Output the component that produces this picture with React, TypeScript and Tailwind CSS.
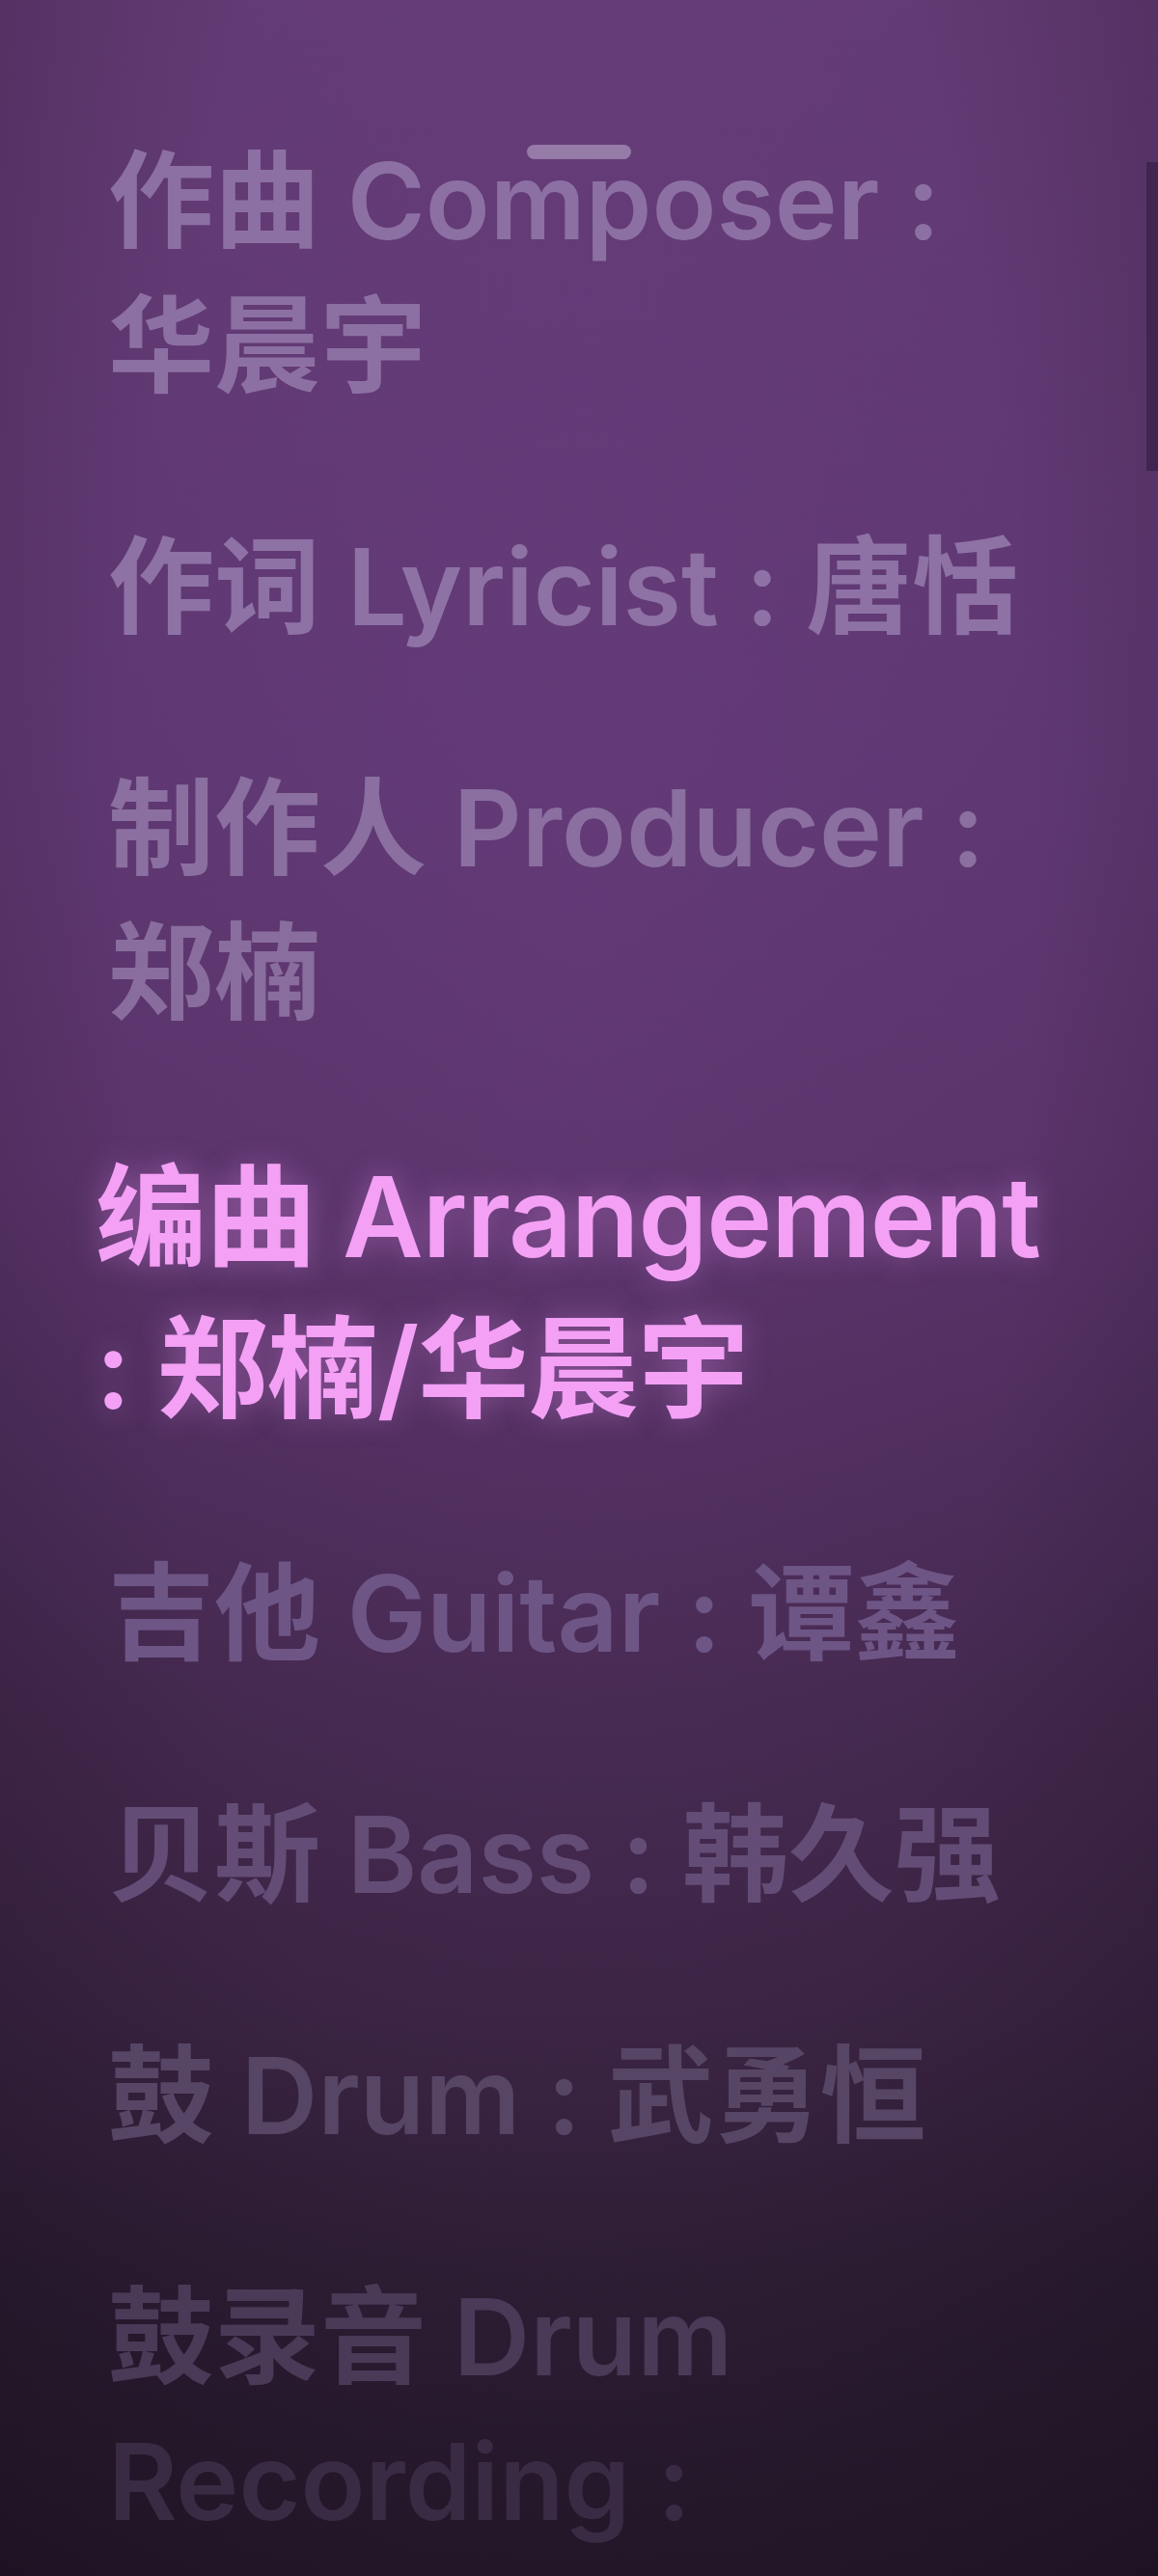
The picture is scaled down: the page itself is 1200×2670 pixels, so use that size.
export default function App() {
  const credits: { lines: [string, string][]; active?: boolean }[] = [
    { lines: [["作曲 Composer :", "text-[#8d70a3]"], ["华晨宇", "text-[#8d70a3]"]] },
    { lines: [["作词 Lyricist : 唐恬", "text-[#8e72a5]"]] },
    { lines: [["制作人 Producer :", "text-[#8a6fa0]"], ["郑楠", "text-[#896d9e]"]] },
    { lines: [["编曲 Arrangement", "text-[#f3a0f5]"], [": 郑楠/华晨宇", "text-[#f3a0f5]"]], active: true },
    { lines: [["吉他 Guitar : 谭鑫", "text-[#6d5585]"]] },
    { lines: [["贝斯 Bass : 韩久强", "text-[#634d76]"]] },
    { lines: [["鼓 Drum : 武勇恒", "text-[#574565]"]] },
    { lines: [["鼓录音 Drum", "text-[#4a3957]"], ["Recording :", "text-[#3a2b44]"]] },
  ]

  return (
    <div className="relative h-[2670px] w-full overflow-hidden bg-[linear-gradient(180deg,#633b75_0%,#5f3873_30%,#5a346b_45%,#4d2d5b_58%,#45294f_66%,#3b2444_78%,#2e1e35_88%,#25182b_100%)] font-['Inter','Noto_Sans_CJK_SC',sans-serif] font-semibold">
      {/* soft vignette */}
      <div className="pointer-events-none absolute inset-0 bg-[radial-gradient(ellipse_at_50%_35%,rgba(120,70,140,0.18)_0%,rgba(0,0,0,0)_55%,rgba(12,6,16,0.3)_100%)]" />

      {/* drag handle */}
      <div className="absolute left-[546px] top-[150px] h-[15px] w-[108px] rounded-full bg-[#967aa8]" />

      {/* scrollbar */}
      <div className="absolute right-0 top-[168px] h-[320px] w-[12px] bg-[#3f2550]" />

      <div className="relative flex flex-col gap-[100px] pt-[133px]">
        {credits.map((c, i) => (
          <div
            key={i}
            className={
              c.active
                ? "pl-[99px] text-[115px] leading-[157px] tracking-[-1px] [text-shadow:0_0_30px_rgba(240,150,245,0.35)]"
                : "pl-[112px] text-[110px] leading-[150px] tracking-[0px]"
            }
          >
            {c.lines.map(([text, color], j) => (
              <div key={j} className={`whitespace-nowrap ${color}`}>
                {text}
              </div>
            ))}
          </div>
        ))}
      </div>
    </div>
  )
}
